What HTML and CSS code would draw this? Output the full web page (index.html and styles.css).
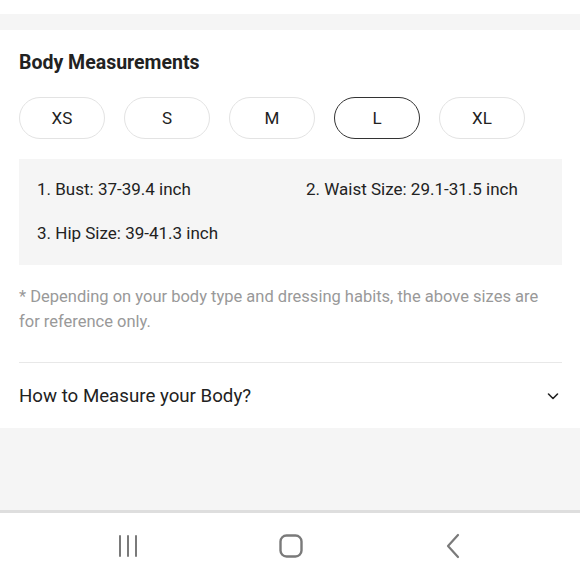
FILE: index.html
```html
<!DOCTYPE html>
<html>
<head>
<meta charset="utf-8">
<link rel="stylesheet" href="styles.css">
</head>
<body>
<div class="top-space"></div>
<div class="band"></div>
<section class="card">
  <h2 class="title">Body Measurements</h2>
  <div class="sizes">
    <button class="pill">XS</button>
    <button class="pill">S</button>
    <button class="pill">M</button>
    <button class="pill active">L</button>
    <button class="pill">XL</button>
  </div>
  <div class="measure">
    <div class="item">1. Bust: 37-39.4 inch</div>
    <div class="item">2. Waist Size: 29.1-31.5 inch</div>
    <div class="item">3. Hip Size: 39-41.3 inch</div>
  </div>
  <p class="note">* Depending on your body type and dressing habits, the above sizes are for reference only.</p>
  <div class="accordion">
    <span>How to Measure your Body?</span>
    <svg class="chev" width="14" height="14" viewBox="0 0 14 14"><path d="M2.5 5 L7 9.5 L11.5 5" fill="none" stroke="#222" stroke-width="1.6" stroke-linecap="round" stroke-linejoin="round"/></svg>
  </div>
</section>
<div class="filler"></div>
<nav class="navbar">
  <svg class="nav-icon" width="24" height="24" viewBox="0 0 24 24"><g stroke="#7a7a7a" stroke-width="2" stroke-linecap="round"><path d="M4 2 V22"/><path d="M12 2 V22"/><path d="M20 2 V22"/></g></svg>
  <svg class="nav-icon" width="26" height="26" viewBox="0 0 26 26"><rect x="2.5" y="2.5" width="21" height="21" rx="6" fill="none" stroke="#7a7a7a" stroke-width="2.4"/></svg>
  <svg class="nav-icon" width="24" height="26" viewBox="0 0 24 26"><path d="M17 2 L7 13 L17 24" fill="none" stroke="#7a7a7a" stroke-width="2.2" stroke-linecap="round" stroke-linejoin="round"/></svg>
</nav>
</body>
</html>
```
FILE: styles.css
```css
* { box-sizing: border-box; }
html, body { margin: 0; padding: 0; }
body {
  width: 580px;
  height: 578px;
  overflow: hidden;
  background: #f5f5f5;
  font-family: Roboto, "Liberation Sans", sans-serif;
  color: #222;
  display: flex;
  flex-direction: column;
}
.top-space { height: 14px; background: #fff; }
.band { height: 16px; background: #f5f5f5; }
.card {
  background: #fff;
  padding: 20px 18px 0 19px;
}
.title {
  margin: 0;
  font-size: 19.5px;
  line-height: 25px;
  font-weight: 700;
  color: #222;
}
.sizes {
  display: flex;
  gap: 19px;
  margin-top: 22px;
}
.pill {
  width: 86px;
  height: 42px;
  border-radius: 21px;
  border: 1px solid #e3e3e3;
  background: #fff;
  font-family: inherit;
  font-size: 17px;
  color: #222;
  padding: 0;
}
.pill.active { border-color: #333; }
.measure {
  margin-top: 20px;
  background: #f5f5f5;
  padding: 18px 0 20px 18px;
  display: grid;
  grid-template-columns: 269px 1fr;
  row-gap: 20px;
  font-size: 17px;
  line-height: 24px;
}
.note {
  margin: 19px 0 0;
  font-size: 16.5px;
  line-height: 25px;
  color: #999;
}
.accordion {
  margin-top: 28px;
  border-top: 1px solid #e8e8e8;
  height: 66px;
  display: flex;
  align-items: center;
  justify-content: space-between;
  font-size: 18.7px;
  color: #222;
}
.chev { margin-right: 2px; }
.filler { flex: 1; background: #f5f5f5; }
.navbar {
  height: 68px;
  background: #fff;
  border-top: 3px solid #dedede;
  display: flex;
  align-items: center;
  justify-content: center;
}
.nav-icon { display: block; }
.navbar .nav-icon:nth-child(1) { margin-right: 138px; }
.navbar .nav-icon:nth-child(2) { margin-right: 137px; }
```
